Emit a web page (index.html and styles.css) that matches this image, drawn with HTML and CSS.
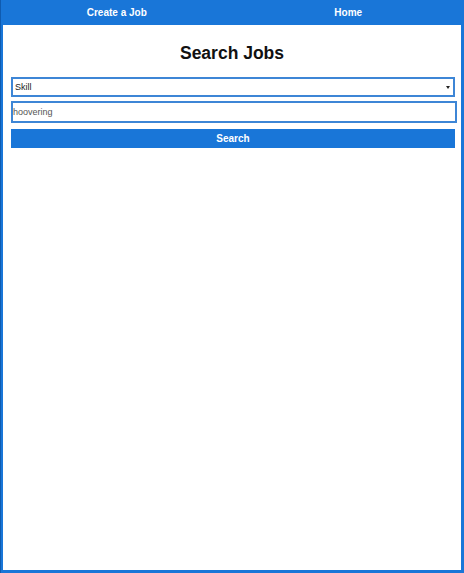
FILE: index.html
```html
<!DOCTYPE html>
<html>
<head>
<meta charset="utf-8">
<link rel="stylesheet" href="styles.css">
</head>
<body>
<div class="page">
  <nav class="nav">
    <a class="nav-link">Create a Job</a>
    <a class="nav-link">Home</a>
  </nav>
  <main class="main">
    <h1 class="title">Search Jobs</h1>
    <form class="form">
      <div class="select-wrap">
        <select class="select"><option>Skill</option></select>
      </div>
      <input class="input" type="text" value="hoovering">
      <button class="button" type="button">Search</button>
    </form>
  </main>
</div>
</body>
</html>
```
FILE: styles.css
```css
html, body {
  margin: 0;
  padding: 0;
}
body {
  font-family: "Liberation Sans", Arial, sans-serif;
  background: #1976d8;
}
.page {
  height: 573px;
  display: flex;
  flex-direction: column;
  box-sizing: border-box;
  border-left: 1px solid #0f5bb0;
}
.nav {
  height: 25px;
  display: flex;
  flex: none;
  background: #1976d8;
}
.nav-link {
  flex: 1;
  display: flex;
  align-items: center;
  justify-content: center;
  color: #ffffff;
  font-weight: bold;
  font-size: 10px;
  padding-bottom: 1px;
}
.main {
  flex: 1;
  background: #ffffff;
  margin: 0 3px 3px 2px;
  padding: 0 0 0 8px;
}
.title {
  margin: 18px 0 0;
  text-align: center;
  font-size: 17.5px;
  line-height: 21px;
  font-weight: bold;
  color: #111111;
  padding-right: 8px;
}
.form {
  display: flex;
  flex-direction: column;
  margin-top: 13px;
}
.select-wrap {
  position: relative;
  width: 444px;
}
.select-wrap::after {
  content: "";
  position: absolute;
  right: 5px;
  top: 9px;
  border-left: 2px solid transparent;
  border-right: 2px solid transparent;
  border-top: 3px solid #222222;
}
.select {
  appearance: none;
  -webkit-appearance: none;
  display: block;
  width: 444px;
  height: 20px;
  box-sizing: border-box;
  border: 2px solid #3d86d6;
  border-radius: 0;
  background: #ffffff;
  font-family: "Liberation Sans", Arial, sans-serif;
  font-size: 9px;
  color: #222222;
  padding: 0 0 0 2px;
  margin: 0;
}
.input {
  display: block;
  width: 446px;
  height: 22px;
  box-sizing: border-box;
  margin: 4px 0 0;
  border: 2px solid #3d86d6;
  border-radius: 0;
  padding: 0;
  font-family: "Liberation Sans", Arial, sans-serif;
  font-size: 9px;
  color: #555555;
  outline: none;
}
.button {
  display: block;
  width: 444px;
  height: 19px;
  box-sizing: border-box;
  margin: 6px 0 0;
  border: none;
  background: #1976d8;
  color: #ffffff;
  font-family: "Liberation Sans", Arial, sans-serif;
  font-weight: bold;
  font-size: 10px;
  padding: 0;
}
```
